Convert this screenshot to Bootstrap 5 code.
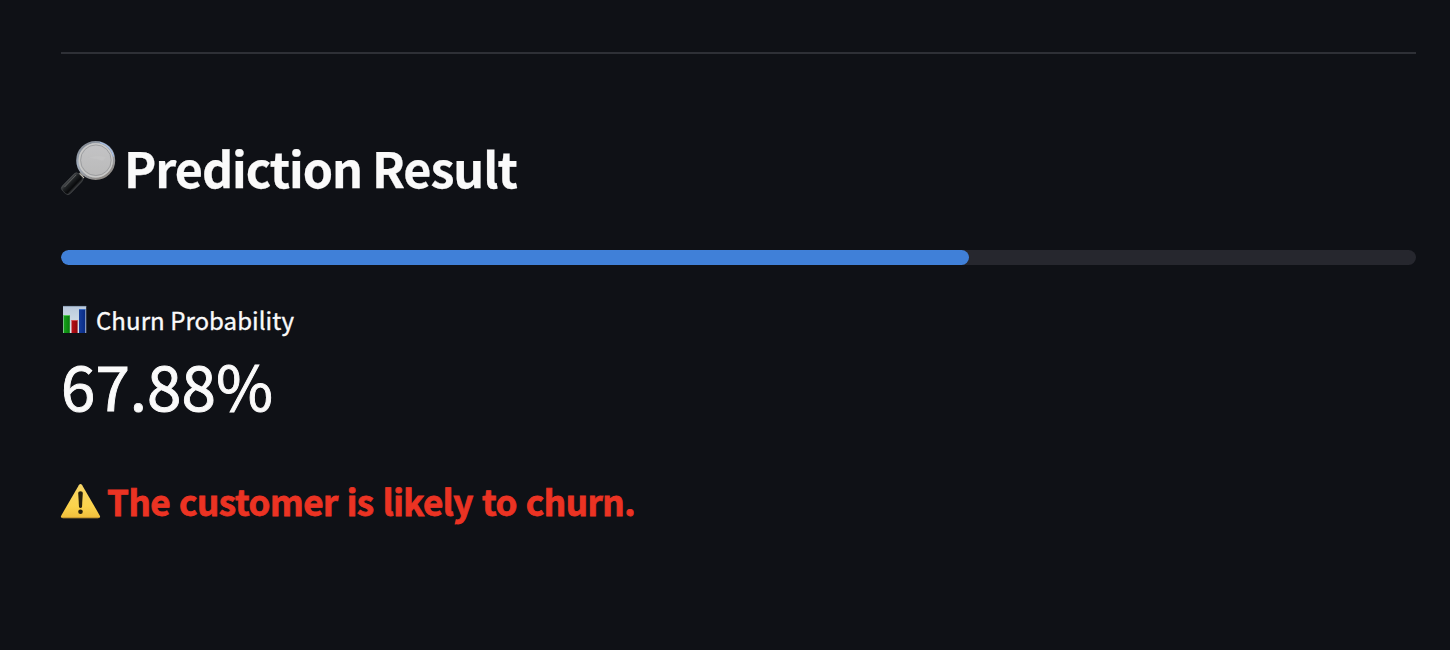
<!DOCTYPE html>
<html lang="en" data-bs-theme="dark">
<head>
<meta charset="utf-8">
<meta name="viewport" content="width=device-width, initial-scale=1">
<title>Prediction Result</title>
<link href="https://cdn.jsdelivr.net/npm/bootstrap@5.3.0/dist/css/bootstrap.min.css" rel="stylesheet">
<style>
body{background:#0f1116;color:#fafafa;font-family:"Noto Sans CJK SC","Noto Sans",sans-serif}
.result-page{padding:52px 34px 0 61px}
.result-page svg{overflow:visible;flex:none}
.rule{height:2px;background:#2e3036}
.title{margin-top:84px;height:64px;gap:8px}
.title h2{font-size:48.5px;line-height:58px;font-weight:700;letter-spacing:-1.07px;padding-bottom:6px;color:#fafafa;-webkit-text-stroke:.25px #fafafa}
.meter{margin-top:48px;height:15px;border-radius:8px;background:#26272e}
.meter .progress-bar{background:#4080d8;border-radius:8px}
.metric-label{margin-top:38px;height:36px;font-size:24px;line-height:34px;gap:9px}
.metric-label span{padding-bottom:2px;letter-spacing:.06px;-webkit-text-stroke:.35px #fafafa}
.metric-value{margin-top:12px;height:72px;font-size:62px;line-height:67px;-webkit-text-stroke:.9px #fafafa}
.verdict{margin-top:53px;height:56px;font-size:35px;line-height:48px;font-weight:700;color:#eb3323;gap:6px}
.verdict span{padding-bottom:6px;letter-spacing:-.49px;word-spacing:1.5px;-webkit-text-stroke:.8px #eb3323}
</style>
</head>
<body>
<main class="result-page">
<div class="rule"></div>
<div class="title d-flex align-items-center">
<svg width="55" height="56" viewBox="61 142 55 56" aria-hidden="true">
<defs>
<linearGradient id="rim" x1="0" y1="0" x2=".6" y2="1"><stop offset="0" stop-color="#777b80"/><stop offset=".45" stop-color="#a2adbd"/><stop offset="1" stop-color="#8f8b87"/></linearGradient>
<linearGradient id="grip" x1="0" y1="0" x2="0" y2="1"><stop offset="0" stop-color="#4a4d50"/><stop offset=".3" stop-color="#202325"/><stop offset=".75" stop-color="#08090b"/><stop offset="1" stop-color="#3b3d3f"/></linearGradient>
<linearGradient id="glass" x1="0" y1="0" x2="0" y2="1"><stop offset="0" stop-color="#c4c4c6"/><stop offset="1" stop-color="#b9b9b9"/></linearGradient>
</defs>
<path d="M78 178l6-6" stroke="#85827d" stroke-width="5"/>
<path d="M80 174.500l4 3.500" stroke="#c6c1b8" stroke-width="1.200"/>
<g transform="translate(73 182.800) rotate(-46)"><rect x="-13" y="-5.500" width="23.500" height="11" rx="3.600" fill="url(#grip)" stroke="#44474a" stroke-width=".7"/><path d="M-9-3.200H8" stroke="#666" stroke-width=".8"/></g>
<circle cx="95.700" cy="160.400" r="18.300" fill="url(#glass)" stroke="url(#rim)" stroke-width="2.400"/>
<circle cx="95.700" cy="160.400" r="16.400" fill="none" stroke="#c9c9c8" stroke-width="1.300"/>
<circle cx="95.900" cy="160.200" r="15.300" fill="none" stroke="#969799" stroke-width=".8"/>
<path d="M100 142.500a18.300 18.300 0 0 1 13.500 14" fill="none" stroke="#a9c5f0" stroke-width="1.200"/>
<path d="M86 159q9-5 20-2l-3 4q-10-4-17-2z" fill="#d0d0d0" opacity=".25"/>
</svg>
<h2 class="m-0 text-nowrap">Prediction Result</h2></div>
<div class="progress meter" role="progressbar" aria-valuenow="67" aria-valuemin="0" aria-valuemax="100"><div class="progress-bar" style="width:67%"></div></div>
<div class="metric-label d-flex align-items-center">
<svg width="26" height="28" viewBox="61 307 26 28" aria-hidden="true">
<defs>
<linearGradient id="sheet" x1="0" y1="0" x2="0" y2="1"><stop offset="0" stop-color="#b9c9dc"/><stop offset="1" stop-color="#dfe6ec"/></linearGradient>
<linearGradient id="barG"><stop offset="0" stop-color="#18a51d"/><stop offset="1" stop-color="#087c0b"/></linearGradient>
<linearGradient id="barR"><stop offset="0" stop-color="#b91018"/><stop offset="1" stop-color="#8d050b"/></linearGradient>
<linearGradient id="barB"><stop offset="0" stop-color="#173f9e"/><stop offset="1" stop-color="#082a83"/></linearGradient>
</defs>
<rect x="63" y="306" width="23.200" height="27" fill="url(#sheet)"/>
<path d="M63 306.400h23.200" stroke="#8497ad" stroke-width=".8"/>
<rect x="63.500" y="315.300" width="6.300" height="17.700" fill="url(#barG)"/><path d="M63.500 315.500h6.300" stroke="#54ca54"/>
<rect x="71.500" y="320.300" width="6.100" height="12.700" fill="url(#barR)"/><path d="M71.500 320.500h6.100" stroke="#d64c50"/>
<rect x="79" y="309.300" width="6.400" height="23.700" fill="url(#barB)"/><path d="M79 309.500h6.400" stroke="#386bc3"/>
</svg>
<span>Churn Probability</span></div>
<div class="metric-value"><span>67.88%</span></div>
<div class="verdict d-flex align-items-center">
<svg width="40" height="38" viewBox="61 485 40 38" aria-hidden="true">
<defs><linearGradient id="warn" x1="0" y1="0" x2="0" y2="1"><stop offset="0" stop-color="#f7d568"/><stop offset=".65" stop-color="#fbd34c"/><stop offset="1" stop-color="#efbe3b"/></linearGradient></defs>
<path d="M78.800 485.300Q80.500 482.500 82.200 485.300L99.700 515.400Q101 518.200 98 518.200H63Q60 518.200 61.300 515.400Z" fill="url(#warn)"/>
<path d="M62 517.500H99" stroke="#c4942d" stroke-width=".8"/>
<path d="M78.200 493Q78.100 491.200 80.500 491.200T82.800 493L82 506.800Q81.800 508 80.500 508T79 506.800Z" fill="#26200d"/>
<circle cx="80.500" cy="511.700" r="2.300" fill="#26200d"/>
</svg>
<span>The customer is likely to churn.</span></div>
</main>
<script src="https://cdn.jsdelivr.net/npm/bootstrap@5.3.0/dist/js/bootstrap.bundle.min.js"></script>
</body>
</html>
